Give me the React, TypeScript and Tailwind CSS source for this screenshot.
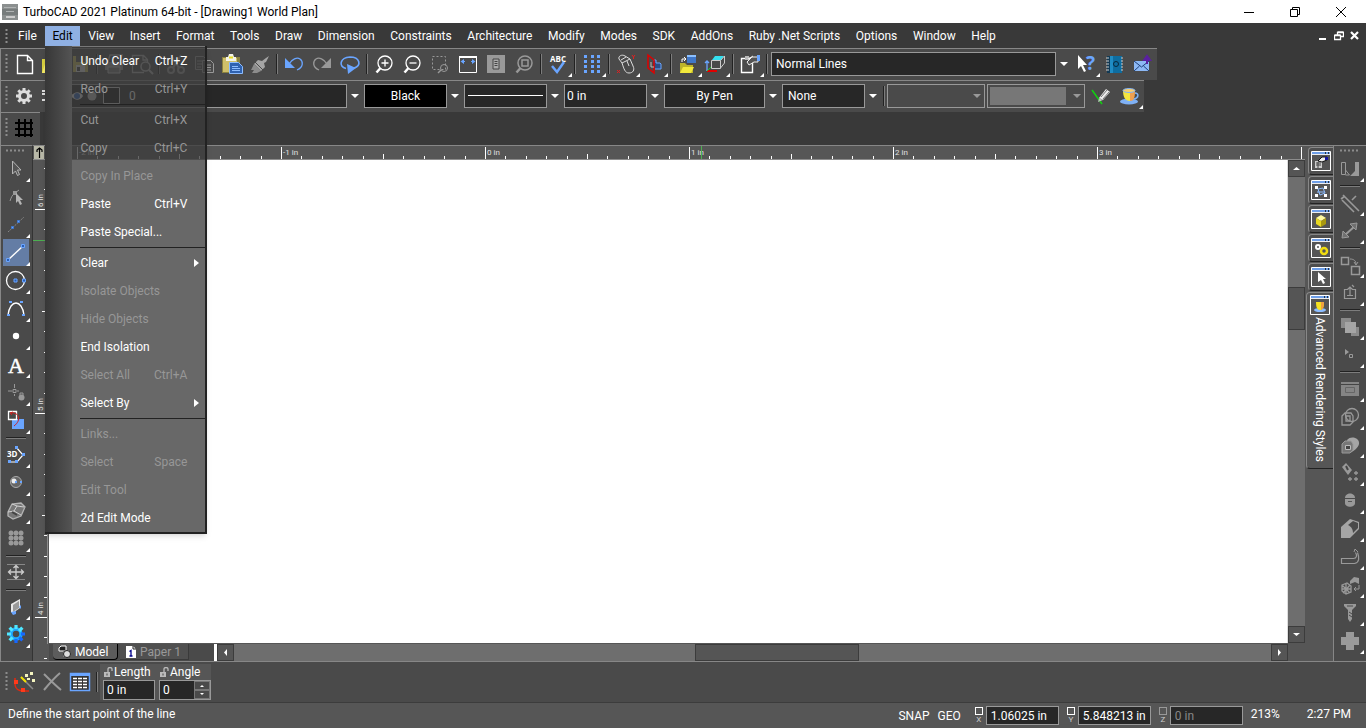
import type { ReactNode } from 'react';
import clsx from 'clsx';

const BLUE = '#6aa5ff';
const GRAY = '#999999';

/* All tool glyphs are drawn on a 28x28 grid, the size of one tool button */
const icons: Record<string, ReactNode> = {
    newFile: <path d="M7.5 5.5h10l5 5v13h-15zM17.5 5.5v5h5" stroke="#fff" strokeWidth="1.4" />,
    open: (
        <>
            <path d="M4 9h7l2 2h9v12H4z" fill="#d8d040" />
            <path d="M7 14h18l-4 9H4z" fill="#f5ec6a" />
        </>
    ),
    save: (
        <>
            <path d="M7 6h15v16H7z" fill="#c9bd5a" />
            <path d="M10 6h9v6h-9z" fill="#555" />
            <path d="M10 15h9v7h-9z" fill="#ddd" />
            <path d="M11 17h3v4h-3z" fill="#444" />
        </>
    ),
    print: (
        <>
            <path d="M8 12l2-7h12l-2 7" stroke="#aaa" strokeWidth="1.5" />
            <path d="M5 12h18v8H5z" fill={GRAY} />
            <path d="M8 17h12v6H8z" fill="#777" stroke="#bbb" />
        </>
    ),
    preview: (
        <>
            <path d="M16 22.5H4.5v-17h11l4 4v3M15 5v5h5" stroke="#aaa" strokeWidth="1.3" />
            <circle cx="17.5" cy="16.5" r="4.5" stroke="#aaa" strokeWidth="1.5" />
            <path d="M21 20l4 4" stroke="#aaa" strokeWidth="2" />
        </>
    ),
    cut: (
        <>
            <path d="M9 5l8 13M19 5l-8 13" stroke={GRAY} strokeWidth="2" />
            <circle cx="9" cy="20" r="3" stroke={GRAY} strokeWidth="2" />
            <circle cx="19" cy="20" r="3" stroke={GRAY} strokeWidth="2" />
        </>
    ),
    copy: (
        <>
            <path d="M5.5 6.5h8l3 3v10h-11zM7 11h6M7 14h6M7 17h4" stroke={GRAY} />
            <path d="M12.5 10.5h8l3 3v9h-11z" fill="#4a4a4a" stroke={GRAY} />
            <path d="M15 15h6M15 17.5h6M15 20h6" stroke={GRAY} />
        </>
    ),
    paste: (
        <>
            <path d="M4 7h18v16H4z" fill="#8b8240" />
            <path d="M5 8h14v14H5z" fill="#cfc06a" />
            <path d="M8 7h2l1-3h4l1 3h2v4H8z" fill="#f4f4e8" />
            <path d="M11 6.5h4v2h-4z" fill="#e4da20" />
            <path d="M11.5 12.5h9l4 4v7h-13z" fill="#2f62b0" stroke="#8cbcff" />
            <path d="M14 16.5h6M14 18.5h8M14 20.5h8" stroke="#8cbcff" />
        </>
    ),
    brush: (
        <>
            <path d="M20 8l3-2-3 6-2 1 1 4-4 4-7-7 4-4 4 1z" fill="#a5a5a5" />
            <path d="M8 14l7 7-4 2-5 0 2-3-3 0z" fill="#8c8c8c" />
            <path d="M9 12l8 8" stroke="#4a4a4a" />
        </>
    ),
    undo: (
        <>
            <path d="M5 8v10h10z" fill={BLUE} />
            <path d="M9 14c3-5 8-7 11-5s4 8-3 11" stroke={BLUE} strokeWidth="1.3" />
        </>
    ),
    redo: (
        <>
            <path d="M23 8v10H13z" fill={GRAY} />
            <path d="M19 14c-3-5-8-7-11-5s-4 8 3 11" stroke={GRAY} strokeWidth="1.3" />
        </>
    ),
    repeat: (
        <>
            <path d="M10 18.5c-8-2-6-11 4-11.5 10 0 12 9 4 11" stroke={BLUE} strokeWidth="1.6" />
            <path d="M11 14l9 4-8 6z" fill={BLUE} />
        </>
    ),
    zoomIn: (
        <>
            <circle cx="15" cy="13" r="7" stroke="#fff" strokeWidth="1.3" />
            <path d="M15 9.5v7M11.5 13h7" stroke="#fff" strokeWidth="1.3" />
            <path d="M10.5 18L6.5 22.5" stroke="#fff" strokeWidth="2.5" />
        </>
    ),
    zoomOut: (
        <>
            <circle cx="15" cy="13" r="7" stroke="#fff" strokeWidth="1.3" />
            <path d="M11.5 13h7" stroke="#fff" strokeWidth="1.3" />
            <path d="M10.5 18L6.5 22.5" stroke="#fff" strokeWidth="2.5" />
        </>
    ),
    zoomWindow: (
        <>
            <path d="M6.5 6.5h13v13h-13z" stroke={GRAY} strokeDasharray="2 2" />
            <circle cx="18" cy="18" r="3.5" stroke={GRAY} />
            <path d="M15 20l-3 3" stroke={GRAY} strokeWidth="1.5" />
        </>
    ),
    zoomExtents: (
        <>
            <path d="M5.5 6.5h17v16h-17z" stroke="#fff" />
            <path d="M5 7h18" stroke="#fff" strokeWidth="2" />
            <path d="M6.5 11.5l3.5-2.5v5zM21.5 11.5l-3.5-2.5v5z" fill={BLUE} />
            <path d="M9 11.5h2M17 11.5h2" stroke={BLUE} />
        </>
    ),
    zoomPage: (
        <>
            <path d="M5 5h18v18H5z" fill={GRAY} />
            <path d="M11 9h6v10h-6z" fill="#aaa" stroke="#444" />
            <path d="M12.5 11.5h3M12.5 13.5h3M12.5 15.5h3" stroke="#444" />
        </>
    ),
    zoomSelection: (
        <>
            <circle cx="15" cy="13" r="7" stroke={GRAY} strokeWidth="1.5" />
            <path d="M12 10h6v6h-6z" stroke={GRAY} strokeWidth="1.5" />
            <path d="M10.5 18L6.5 22.5" stroke={GRAY} strokeWidth="2.5" />
        </>
    ),
    spell: (
        <>
            <text x="6" y="12" fontSize="8" fontWeight="700" fill="#fff" fontFamily="Open Sans, sans-serif">ABC</text>
            <path d="M8 16l5 6 7-10" stroke={BLUE} strokeWidth="2.5" />
        </>
    ),
    snapGrid: (
        <path d="M6 5h3v3H6zM13 5h3v3h-3zM19 5h3v3h-3zM6 10h3v3H6zM13 10h3v3h-3zM19 10h3v3h-3zM6 15h3v3H6zM13 15h3v3h-3zM19 15h3v3h-3zM6 20h3v3H6zM13 20h3v3h-3zM19 20h3v3h-3z" fill={BLUE} />
    ),
    mouse: (
        <>
            <path d="M10 13l8-4 3 7c2 4 0 7-4 7-4 0-5-4-7-10zM15 11l2 5M10 13l-3-4c-1-3 3-5 6-3l5 3M9 10l5-3" stroke="#ddd" />
            <path d="M5 20l3 3M8 20l-3 3M20 5l1.5 2L23 5M21.5 7v2" stroke="#e02020" />
        </>
    ),
    mirrorPlane: (
        <>
            <path d="M13 10h3v3h4l1 1v5h-6" fill="#2b4f85" stroke={BLUE} />
            <path d="M8 5l6 5v13l-6-5z" stroke="#e00000" strokeWidth="1.5" />
            <path d="M11 12v5h3" stroke="#bbb" />
        </>
    ),
    library: (
        <>
            <path d="M13 5h9v8h-9z" fill="#4077c8" />
            <path d="M13 5h9v2h-9z" fill="#8cc0ff" />
            <path d="M8 12V9h4M10 7l2 2-2 2" stroke="#fff" />
            <path d="M6 13h5l2 2h6v8H6z" fill="#bcb32a" />
            <path d="M9 17h11l-3 6H6z" fill="#f2e93c" />
        </>
    ),
    workplane: (
        <>
            <path d="M13 6h9l-3 4h-9z" fill="#35e0f0" />
            <path d="M9.5 10.5h9v8h-9zM18.5 10.5l4-4.5v7l-4 5" stroke="#ccc" />
            <path d="M5 21V11M3 13l2-2 2 2" stroke={BLUE} strokeWidth="1.3" />
            <path d="M5 21h10" stroke="#e00000" strokeWidth="2" />
            <path d="M5 21l4-4" stroke="#20d020" />
        </>
    ),
    properties: (
        <>
            <path d="M5.5 8.5h11v14h-11z" stroke="#fff" strokeWidth="1.4" />
            <path d="M9 6h4v4H9z" fill="#bbb" />
            <path d="M11 12l5-5h6v5h-4l-5 3zM12 9l5-3" fill="#555" stroke="#eee" />
            <path d="M21 5h3v6h-3z" fill={BLUE} />
        </>
    ),
    whatsThis: (
        <>
            <path d="M6 5v14l3-3 3 6 2-1-3-6h4z" fill="#fff" />
            <text x="14" y="20" fontSize="19" fontWeight="700" fill={BLUE} fontFamily="Open Sans, sans-serif">?</text>
        </>
    ),
    book: (
        <>
            <path d="M7 6h15v17H7z" fill="#0e6da0" />
            <path d="M7 6h3v17H7z" fill="#123a55" />
            <path d="M10 6h3v17h-3z" fill="#1f8cc4" />
            <path d="M6 8h3M6 11h3M6 14h3M6 17h3M6 20h3M21 8h2M21 11h2M21 14h2M21 17h2M21 20h2" stroke="#ccc" />
            <circle cx="16" cy="14" r="2.5" stroke="#06283c" />
        </>
    ),
    mail: (
        <>
            <path d="M6 11h15v10H6z" fill="#8db9f5" />
            <path d="M6 11l7.5 6 7.5-6M6 21l5.5-5M21 21l-5.5-5" stroke="#1d3f78" />
            <path d="M19 14V8M16 10l3-4 3 4z" stroke="#5a20a0" strokeWidth="2" fill="#5a20a0" />
        </>
    ),
    gear: (
        <>
            <circle cx="14" cy="14" r="4.5" stroke="#ddd" strokeWidth="3" />
            <path d="M14 6v3M14 19v3M6 14h3M19 14h3M8.3 8.3l2.2 2.2M17.5 17.5l2.2 2.2M8.3 19.7l2.2-2.2M17.5 10.5l2.2-2.2" stroke="#ddd" strokeWidth="3" />
        </>
    ),
    layers: <path d="M4 9h12M4 12h12M4 18h12" stroke="#ddd" strokeWidth="2" />,
    pencil: (
        <>
            <path d="M5 8l10 14" stroke="#10d010" strokeWidth="1.5" />
            <path d="M12 16l7-9 4 3-7 8z" fill="#eee" />
            <path d="M14 15l6-7M16 17l6-7" stroke="#777" />
            <path d="M12 16l-1 4 5-2z" fill="#bbb" />
        </>
    ),
    cup: (
        <>
            <ellipse cx="14" cy="19.5" rx="9" ry="3" fill="#7fb1f5" />
            <path d="M8 8h7v11c-5 0-7-4-7-11z" fill="#f5e640" />
            <path d="M15 8h5c0 8-1 11-5 11z" fill="#f0a050" />
            <ellipse cx="14" cy="8.5" rx="6" ry="2" fill="#f8d070" stroke="#7fb1f5" />
            <path d="M20 11c4 0 4 5-1 6" stroke="#7fb1f5" strokeWidth="1.5" />
        </>
    ),
    hash: <path d="M9 5v18M15 5v18M21 5v18M5 9h18M5 15h18M5 21h18" stroke="#000" strokeWidth="2" />,

    /* drawing tools, left bar */
    select: <path d="M10.5 6v13l3-3 2 4.5 2-1-2-4.5h3.5z" fill="#555" stroke="#b5b5b5" />,
    editNode: (
        <>
            <path d="M13 10c-3 2-4 5-5 8M13 10l4-3" stroke={GRAY} />
            <path d="M11 8h4v4h-4z" fill={GRAY} />
            <path d="M14 10v10l2-2 2 4 2-1-2-4h3z" fill="#b5b5b5" />
        </>
    ),
    construction: (
        <>
            <path d="M6 21L22 6" stroke="#888" strokeDasharray="2 1" />
            <path d="M9.5 15.5h2v2h-2zM15.5 9.5h2v2h-2z" fill={BLUE} stroke="#3f78d0" />
        </>
    ),
    line: (
        <>
            <path d="M6 21L21 7" stroke="#fff" strokeWidth="1.4" />
            <path d="M4.5 19.5h3v3h-3zM19.5 5.5h3v3h-3z" fill="#2b5fb5" stroke={BLUE} />
        </>
    ),
    circle: (
        <>
            <circle cx="13.5" cy="13.5" r="9" stroke="#fff" strokeWidth="1.3" />
            <path d="M12 12h3v3h-3zM20.5 12h3v3h-3z" fill="#2b5fb5" stroke={BLUE} />
        </>
    ),
    spline: (
        <>
            <path d="M6 20C8 4 20 4 22 20" stroke="#fff" strokeWidth="1.3" />
            <path d="M7 6h3v2H7zM18 6h3v2h-3zM5 19h3v2H5zM20 19h3v2h-3z" fill={BLUE} />
        </>
    ),
    point: <circle cx="14" cy="13" r="3.2" fill="#fff" />,
    text: <text x="6" y="22" fontSize="22" fill="#fff" stroke="#fff" strokeWidth=".5" fontFamily="Liberation Serif, serif">A</text>,
    constraint: (
        <>
            <path d="M6 12h4M12.5 5v4M15 12h2M12.5 15v2M11 10.5h3v3h-3z" stroke={GRAY} />
            <circle cx="19.5" cy="18.5" r="3" fill={GRAY} />
            <path d="M18 16v-2h3v2" stroke={GRAY} />
        </>
    ),
    rotateCopy: (
        <>
            <path d="M10 12h12v10H10z" fill={BLUE} />
            <path d="M6.5 4.5h8v8h-8z" stroke="#fff" strokeWidth="1.3" />
            <path d="M9 6c8-1 11 7 3 13M11 5L8 6l2 2" stroke="#d02020" />
        </>
    ),
    poly3d: (
        <>
            <path d="M14 6l7 8-6 7H7" stroke="#fff" strokeWidth="1.2" />
            <path d="M13 5h3v3h-3zM20 12h3v3h-3zM13 19h3v3h-3zM6 19h3v3H6z" fill={BLUE} />
            <text x="5" y="16" fontSize="8" fontWeight="700" fill="#fff" fontFamily="Open Sans, sans-serif">3D</text>
        </>
    ),
    sphere: (
        <>
            <circle cx="14" cy="13" r="5.5" fill="#666" stroke="#aaa" />
            <circle cx="12" cy="12" r="2.5" fill="#eee" />
            <path d="M13 12h2v2h-2zM18 12h2v2h-2z" fill={BLUE} />
        </>
    ),
    cylinder: (
        <>
            <path d="M6 15l4-8 9-1 4 4-4 9-8 3-5-3z" fill="#777" stroke="#b5b5b5" strokeWidth="1.3" />
            <path d="M6 15l6-1 7 4M10 7l5 2-3 5M15 9l7 1" stroke="#d0d0d0" />
            <path d="M10 15l5 3" stroke="#444" strokeWidth="2" />
        </>
    ),
    patternCopy: (
        <g fill={GRAY}>
            <circle cx="9" cy="8" r="2.5" /><circle cx="14" cy="8" r="2.5" /><circle cx="19" cy="8" r="2.5" />
            <circle cx="9" cy="13" r="2.5" /><circle cx="14" cy="13" r="2.5" /><circle cx="19" cy="13" r="2.5" />
            <circle cx="9" cy="18" r="2.5" /><circle cx="14" cy="18" r="2.5" /><circle cx="19" cy="18" r="2.5" />
        </g>
    ),
    move: (
        <>
            <path d="M5 5.5h18M5 20.5h18" stroke="#888" />
            <path d="M14 7v12M7 13h14M11.5 9L14 6.5 16.5 9M11.5 17l2.5 2.5 2.5-2.5M9 10.5L6.5 13 9 15.5M19 10.5l2.5 2.5-2.5 2.5" stroke="#ccc" strokeWidth="1.3" />
        </>
    ),
    slab: (
        <>
            <path d="M9 11l9-5v9l-7 5-2-1z" fill="#e8e8e8" />
            <path d="M11 12l6-4v7l-6 4z" fill="#999" />
            <path d="M9 19l5-1v3l-3 1zM17 14l2-2v4z" fill={BLUE} />
        </>
    ),
    gearBlue: (
        <>
            <circle cx="14" cy="13" r="5" stroke="#1fa8ff" strokeWidth="3.5" />
            <path d="M14 4v4M5 13h4M7.6 6.6l3 3M17 10l3.4-3.4M7.6 19.4l3-3" stroke="#4fe6ff" strokeWidth="3.2" />
            <path d="M14 18v4M19 13h4M17.4 16.4l3 3" stroke="#1668ff" strokeWidth="3.2" />
        </>
    ),

    /* modify tools, right bar */
    join: (
        <>
            <path d="M5.5 7.5h4v12h-4zM9.5 15l4 5h-4" stroke={GRAY} />
            <path d="M19 7h4v14h-9l5-5z" fill={GRAY} />
        </>
    ),
    offset: <path d="M7 6l16 16M6 11l12 12M5 10l4-3M16 11l4-4" stroke={GRAY} strokeWidth="1.6" />,
    stretch: (
        <>
            <path d="M9 18L19 9" stroke={GRAY} strokeWidth="2" />
            <path d="M6 21l1-7 6 6zM21 6l-7 1 6 6z" fill="#707070" stroke={GRAY} />
        </>
    ),
    transform: (
        <>
            <path d="M5.5 6.5h7v7h-7zM15.5 15.5h8v8h-8z" stroke={GRAY} strokeWidth="1.5" />
            <path d="M14 8c4 0 6 2 6 5M18 11l2 3 2-3" stroke={GRAY} />
        </>
    ),
    extrude: (
        <>
            <path d="M12 10.5H8.5v9h11v-9H16M11 16.5h6" stroke={GRAY} strokeWidth="1.2" />
            <path d="M14 16V8M11.5 10.5L14 8l2.5 2.5M18 8l-2-2" stroke={GRAY} strokeWidth="1.2" />
        </>
    ),
    group: (
        <>
            <path d="M5 5h10v10H5z" fill="#8a8a8a" />
            <path d="M15 14h8v9h-8z" fill="#8a8a8a" />
            <path d="M9 9h11v11H9z" fill="#a5a5a5" />
        </>
    ),
    copyEntity: (
        <>
            <path d="M9 8l4 3-4 3z" fill={GRAY} />
            <path d="M13.5 13.5h3v3h-3z" stroke={GRAY} />
        </>
    ),
    wall: (
        <>
            <path d="M5 7h18v14H5z" fill="#858585" />
            <path d="M5 9.5h18" stroke="#444" />
            <path d="M9.5 12.5h9v5h-9z" stroke="#666" />
        </>
    ),
    union: (
        <>
            <circle cx="16" cy="12" r="6.5" stroke={GRAY} strokeWidth="1.3" />
            <path d="M6 13l3-3h6l2 3v6l-3 3H6zM10 13h4v5h-4z" stroke={GRAY} strokeWidth="1.3" />
        </>
    ),
    subtract: (
        <>
            <path d="M11 9c4-5 13-2 12 4-1 4-5 7-9 9z" fill="#a5a5a5" />
            <path d="M6 13l3-3h6l2 3v6l-3 3H6z" fill="#777" stroke={GRAY} />
            <path d="M9.5 14.5h5v4h-5z" stroke="#bbb" fill="#444" />
        </>
    ),
    spray: (
        <>
            <path d="M6 8l4-4 6 7-4 5z" fill={GRAY} />
            <path d="M10 7l2 4" stroke="#444" strokeWidth="2" />
            <path d="M20 12v4M18 14h4M20 18v4M18 20h4M14 18v4M12 20h4" stroke={GRAY} strokeWidth="1.3" />
        </>
    ),
    fixture: (
        <>
            <path d="M9 11c0-6 10-6 10 0v5c0 5-10 5-10 0z" fill={GRAY} />
            <path d="M8 11.5h12" stroke="#4a4a4a" />
            <path d="M12 14.5h4" stroke="#555" />
        </>
    ),
    roof: (
        <>
            <path d="M5 12l9-8 9 3v7l-9 9H5z" fill="#a5a5a5" />
            <path d="M12 10l5-4 5 2v5l-5 5c0-3-1-6-5-8z" fill="#4a4a4a" />
        </>
    ),
    sweep: (
        <>
            <path d="M5.5 15.5h12c3 0 4-3 2-6M5.5 20.5h13c5-1 5-6 3-11M5.5 15v6" stroke={GRAY} strokeWidth="1.2" />
            <path d="M18 9l1-3 3 3" stroke={GRAY} />
        </>
    ),
    assemble: (
        <>
            <path d="M14 10l4-4 5 1v6l-4-2-5 2z" fill={GRAY} />
            <path d="M6 14l5-2 4 3v6l-5 2-4-3zM6 14l8 8M14 14l-7 8M10 12v11M6 18h9" stroke={GRAY} strokeWidth="1.3" />
            <path d="M23 14v4h-5M20 16l-2 2 2 2" stroke={GRAY} />
        </>
    ),
    screw: (
        <>
            <path d="M8 5h12v2l-4 4v9l-2 3-2-3v-9L8 7z" fill={GRAY} />
            <path d="M11 7h6M13 13l3 2M13 16l3 2" stroke="#4a4a4a" />
        </>
    ),
    plus: <path d="M10 5h8v5h5v8h-5v5h-8v-5H5v-8h5z" fill="#9a9a9a" />,

    /* line tool inspector */
    wizard: (
        <>
            <path d="M5 10v6c0 5 4 7 8 7h6" stroke="#e02810" strokeWidth="1.6" />
            <path d="M4 12h4v4H4zM11 20h4v4h-4z" fill="#ff3a1a" />
            <path d="M11 9l12 12" stroke="#888" strokeWidth="1.5" />
            <path d="M11 9l5 5" stroke="#f0e000" strokeWidth="2" />
            <path d="M15 6h3v3h-3zM20 4h3v3h-3zM17 10h3v2h-3zM22 11h3v3h-3z" fill="#f4f4c0" />
        </>
    ),
    cancel: <path d="M6 6c5 5 11 11 17 16M22 5C16 10 11 16 6 22" stroke={GRAY} strokeWidth="2" />,
    table: (
        <>
            <path d="M4.5 5.5h19v17h-19z" fill="#333" stroke={BLUE} strokeWidth="1.5" />
            <path d="M4 5h20v3H4z" fill={BLUE} />
            <path d="M7 10.5h14M7 13.5h14M7 16.5h14M7 19.5h14" stroke="#fff" strokeWidth="1.6" strokeDasharray="4 1" />
        </>
    ),
};

interface Tool {
    icon: string;
    label: string;
    more?: boolean;
    active?: boolean;
}

const t = (icon: string, label: string, more = false, active = false): Tool => ({ icon, label, more, active });

const mainTools: Tool[][] = [
    [t('newFile', 'New'), t('open', 'Open'), t('save', 'Save')],
    [t('print', 'Print'), t('preview', 'Print Preview')],
    [t('cut', 'Cut'), t('copy', 'Copy'), t('paste', 'Paste'), t('brush', 'Format Painter')],
    [t('undo', 'Undo'), t('redo', 'Redo'), t('repeat', 'Repeat')],
    [
        t('zoomIn', 'Zoom In'),
        t('zoomOut', 'Zoom Out'),
        t('zoomWindow', 'Zoom Window'),
        t('zoomExtents', 'Zoom Extents'),
        t('zoomPage', 'Zoom Page'),
        t('zoomSelection', 'Zoom Selection'),
    ],
    [t('spell', 'Spelling', true)],
    [t('snapGrid', 'Snap Grid', true)],
    [t('mouse', 'Input Device', true), t('mirrorPlane', 'Section Plane', true)],
    [t('library', 'Library', true), t('workplane', 'Workplane', true)],
    [t('properties', 'Properties', true)],
];

const drawTools: Tool[][] = [
    [
        t('select', 'Select', true),
        t('editNode', 'Node Edit'),
        t('construction', 'Construction Line', true),
        t('line', 'Line', true, true),
        t('circle', 'Circle', true),
        t('spline', 'Curve', true),
        t('point', 'Point', true),
        t('text', 'Text', true),
        t('constraint', 'Constraint', true),
        t('rotateCopy', 'Transform', true),
    ],
    [t('poly3d', '3D Polyline', true), t('sphere', 'Sphere', true), t('cylinder', 'Cylinder', true), t('patternCopy', 'Pattern', true)],
    [t('move', 'Move', true)],
    [t('slab', 'Slab', true), t('gearBlue', 'Settings', true)],
];

const modifyTools: Tool[][] = [
    [t('join', 'Join', true)],
    [t('offset', 'Offset', true), t('stretch', 'Stretch', true)],
    [t('transform', 'Transform', true), t('extrude', 'Extrude', true)],
    [t('group', 'Group', true), t('copyEntity', 'Copy Entity', true)],
    [
        t('wall', 'Wall', true),
        t('union', 'Union', true),
        t('subtract', 'Subtract', true),
        t('spray', 'Scatter', true),
        t('fixture', 'Fixture', true),
        t('roof', 'Roof', true),
        t('sweep', 'Sweep', true),
        t('assemble', 'Assemble', true),
        t('screw', 'Fastener', true),
        t('plus', 'Add', true),
    ],
];

const menus = [
    'File', 'Edit', 'View', 'Insert', 'Format', 'Tools', 'Draw', 'Dimension', 'Constraints', 'Architecture',
    'Modify', 'Modes', 'SDK', 'AddOns', 'Ruby .Net Scripts', 'Options', 'Window', 'Help',
];

interface MenuEntry {
    text: string;
    keys?: string;
    off?: boolean;
    sub?: boolean;
}

const editMenu: MenuEntry[][] = [
    [{ text: 'Undo Clear', keys: 'Ctrl+Z' }, { text: 'Redo', keys: 'Ctrl+Y', off: true }],
    [
        { text: 'Cut', keys: 'Ctrl+X', off: true },
        { text: 'Copy', keys: 'Ctrl+C', off: true },
        { text: 'Copy In Place', off: true },
        { text: 'Paste', keys: 'Ctrl+V' },
        { text: 'Paste Special...' },
    ],
    [
        { text: 'Clear', sub: true },
        { text: 'Isolate Objects', off: true },
        { text: 'Hide Objects', off: true },
        { text: 'End Isolation' },
        { text: 'Select All', keys: 'Ctrl+A', off: true },
        { text: 'Select By', sub: true },
    ],
    [
        { text: 'Links...', off: true },
        { text: 'Select', keys: 'Space', off: true },
        { text: 'Edit Tool', off: true },
        { text: '2d Edit Mode' },
    ],
];

function ToolButton({ icon, label, more, active }: Tool) {
    return (
        <button type="button" aria-label={label} className="block h-7 w-7 shrink-0">
            <svg viewBox="0 0 28 28" className="h-7 w-7" fill="none">
                {active && <path d="M1 0h26v27H1z" fill="#647da5" />}
                {icons[icon]}
                {more && <path d="M28 23v4h-4z" fill="#fff" />}
            </svg>
        </button>
    );
}

function Grip({ vertical = false }: { vertical?: boolean }) {
    return vertical ? (
        <svg viewBox="0 0 20 3" className="mx-auto h-[3px] w-5 shrink-0">
            <path d="M0 1.5h20" stroke="#8c8c8c" strokeWidth="2" strokeDasharray="2 2" />
        </svg>
    ) : (
        <svg viewBox="0 0 3 20" className="ml-1 h-5 w-[3px] shrink-0">
            <path d="M1.5 0v20" stroke="#8c8c8c" strokeWidth="2" strokeDasharray="2 2" />
        </svg>
    );
}

function Divider() {
    return <div className="mx-[2px] h-5 w-[2px] shrink-0 border-r border-[#7d7d7d] bg-[#222]" />;
}

function ToolRow({ groups }: { groups: Tool[][] }) {
    return (
        <>
            {groups.map((group, i) => (
                <div key={i} className="flex items-center">
                    {i > 0 && <Divider />}
                    {group.map((tool) => <ToolButton key={tool.label} {...tool} />)}
                </div>
            ))}
        </>
    );
}

function ToolColumn({ groups }: { groups: Tool[][] }) {
    return (
        <div className="flex flex-col items-center">
            {groups.map((group, i) => (
                <div key={i}>
                    {i > 0 && <div className="mx-1 my-[2px] h-[2px] border-b border-[#7d7d7d] bg-[#222]" />}
                    {group.map((tool) => <ToolButton key={tool.label} {...tool} />)}
                </div>
            ))}
        </div>
    );
}

function Caret({ dim }: { dim?: boolean }) {
    return (
        <svg viewBox="0 0 16 8" className={clsx('h-2 w-4 shrink-0', dim ? 'text-[#999]' : 'text-white')}>
            <path d="M4 2h8l-4 4z" fill="currentColor" />
        </svg>
    );
}

interface ComboProps {
    label: string;
    value: string;
    box: string;
    children?: ReactNode;
}

function Combo({ label, value, box, children }: ComboProps) {
    return (
        <div className="flex items-center">
            <div className="relative">
                <select aria-label={label} className={clsx('block h-6 appearance-none border border-[#999] text-white outline-none', box)}>
                    <option>{value}</option>
                </select>
                {children}
            </div>
            <Caret />
        </div>
    );
}

function DisabledCombo({ label, filled }: { label: string; filled?: boolean }) {
    return (
        <div className="relative mr-[2px]">
            <select
                aria-label={label}
                disabled
                className={clsx('block h-6 w-[98px] appearance-none border border-[#999] bg-[#4a4a4a] opacity-100', filled && 'bg-[linear-gradient(#777,#777)] bg-[length:76px_18px] bg-[position:2px_2px] bg-no-repeat')}
            />
            <div className="pointer-events-none absolute top-2 right-0"><Caret dim /></div>
        </div>
    );
}

function EditMenu() {
    return (
        <div role="menu" className="absolute top-5 left-0 z-20 flex w-[162px] border-r-2 border-b-2 border-[#222] bg-[#3b3b3b]/77 text-white shadow-md">
            <div className="w-[27px] shrink-0 bg-linear-to-r from-[#373737] to-[#545454]" />
            <div className="min-w-0 flex-1 border-t border-[#777]">
                {editMenu.map((group, i) => (
                    <div key={i}>
                        {i > 0 && <div className="my-px ml-2 h-px bg-[#222]" />}
                        {group.map((entry) => (
                            <button
                                key={entry.text}
                                type="button"
                                role="menuitem"
                                disabled={entry.off}
                                className={clsx('flex h-7 w-full items-center justify-between pr-[18px] pl-2', entry.off && 'text-[#979797]')}
                            >
                                <span>{entry.text}</span>
                                {entry.keys && <span>{entry.keys}</span>}
                                {entry.sub && (
                                    <svg viewBox="0 0 5 8" className="-mr-3 h-2 w-[5px]"><path d="M0 0l5 4-5 4z" fill="#fff" /></svg>
                                )}
                            </button>
                        ))}
                    </div>
                ))}
            </div>
        </div>
    );
}

function TitleBar() {
    return (
        <header className="flex h-[23px] shrink-0 items-center bg-white pr-[2px] pl-[2px] text-black">
            <svg viewBox="0 0 16 16" className="h-4 w-4">
                <path d="M0 0h16v16H0z" fill="#8b8f8f" />
                <path d="M0 5h16v6H0z" fill="#777c7c" />
                <path d="M2 3.5h12M4 7.5h8" stroke="#b0b3b3" />
                <path d="M4 13h9" stroke="#ccc" strokeWidth="2" />
            </svg>
            <h1 className="ml-[5px] flex-1">TurboCAD 2021 Platinum 64-bit - [Drawing1 World Plan]</h1>
            <button type="button" aria-label="Minimize" className="flex w-[46px] justify-center">
                <svg viewBox="0 0 10 10" className="h-[10px] w-[10px]"><path d="M0 5.5h10" stroke="#000" /></svg>
            </button>
            <button type="button" aria-label="Restore" className="flex w-[46px] justify-center">
                <svg viewBox="0 0 10 10" className="h-[10px] w-[10px]" fill="none"><path d="M.5 2.5h7v7h-7zM2.5 2.5v-2h7v7h-2" stroke="#000" /></svg>
            </button>
            <button type="button" aria-label="Close" className="flex w-[46px] justify-center">
                <svg viewBox="0 0 10 10" className="h-[10px] w-[10px]"><path d="M0 0l10 10M10 0L0 10" stroke="#000" /></svg>
            </button>
        </header>
    );
}

function MenuBar() {
    return (
        <nav className="flex h-[25px] shrink-0 items-center justify-between bg-[#393939] pr-[6px]">
            <div className="flex items-center">
                <svg viewBox="0 0 3 14" className="ml-[5px] h-[14px] w-[3px] shrink-0">
                    <path d="M1.5 0v14" stroke="#8c8c8c" strokeWidth="2" strokeDasharray="2 2" />
                </svg>
                <ul className="ml-[3px] flex w-[992px] justify-between">
                    {menus.map((name) => (
                        <li key={name} className="relative">
                            <button type="button" className={clsx('block h-5 px-[7px]', name === 'Edit' && 'bg-[#8fb0e3] text-black')}>{name}</button>
                            {name === 'Edit' && <EditMenu />}
                        </li>
                    ))}
                </ul>
            </div>
            <div className="flex gap-[6px]">
                <button type="button" aria-label="Minimize drawing">
                    <svg viewBox="0 0 10 10" className="h-[10px] w-[10px]"><path d="M1 8h7" stroke="#fff" strokeWidth="2" /></svg>
                </button>
                <button type="button" aria-label="Restore drawing">
                    <svg viewBox="0 0 10 10" className="h-[10px] w-[10px]" fill="none">
                        <path d="M.5 4.5h6v4h-6zM3.5 4V1.5h6v4H7M.5 4h6M3.5 1h6" stroke="#fff" strokeWidth="1.3" />
                    </svg>
                </button>
                <button type="button" aria-label="Close drawing">
                    <svg viewBox="0 0 10 10" className="h-[10px] w-[10px]"><path d="M1 1l7 7M8 1L1 8" stroke="#fff" strokeWidth="2.2" /></svg>
                </button>
            </div>
        </nav>
    );
}

const bar = 'flex h-8 w-fit shrink-0 items-center border-t border-l border-[#878787] bg-[#4a4a4a] pr-px pb-px';

function Toolbars() {
    return (
        <div className="shrink-0 bg-[#393939]">
            <div className={bar}>
                <Grip />
                <div className="ml-[2px] flex items-center">
                    <ToolRow groups={mainTools} />
                    <Divider />
                    <div className="ml-px"><Combo label="Style" value="Normal Lines" box="w-[285px] bg-[#272727] px-1" /></div>
                    <ToolButton icon="whatsThis" label="What's This" more />
                    <ToolButton icon="book" label="Help Book" />
                    <ToolButton icon="mail" label="Feedback" />
                </div>
            </div>
            <div className={bar}>
                <Grip />
                <div className="ml-[2px] flex items-center">
                    <ToolButton icon="gear" label="Options" />
                    <ToolButton icon="layers" label="Layers" />
                    <div className="mr-px flex items-center">
                        <div className="flex h-6 w-[281px] items-center border border-[#999] bg-[#272727] pl-1 text-white">
                            <svg viewBox="0 0 50 18" className="h-[18px] w-[50px]" fill="none">
                                <path d="M0 9c4-5 9-5 12 0-3 5-8 5-12 0z" fill="#ddd" />
                                <circle cx="6" cy="9" r="3" fill="#2b5fb5" />
                                <circle cx="21" cy="9" r="4.5" fill="#bbb" />
                                <path d="M32.5.5h16v16h-16z" fill="#111" stroke="#ccc" />
                            </svg>
                            <span className="ml-2">0</span>
                        </div>
                        <Caret />
                    </div>
                    <div className="flex gap-px">
                        <Combo label="Pen color" value="Black" box="w-[83px] bg-black text-center" />
                        <Combo label="Pen style" value="" box="w-[83px] bg-[#272727]">
                            <div className="pointer-events-none absolute inset-x-1 top-[11px] h-px bg-white" />
                        </Combo>
                        <Combo label="Pen width" value="0 in" box="w-[83px] bg-[#272727] px-[2px]" />
                        <Combo label="Brush color" value="By Pen" box="w-[101px] bg-[#272727] text-center" />
                        <Combo label="Brush style" value="None" box="w-[83px] bg-[#272727] px-[5px]" />
                    </div>
                    <Divider />
                    <DisabledCombo label="Material" />
                    <DisabledCombo label="Environment" filled />
                    <ToolButton icon="pencil" label="Pick Style" />
                    <ToolButton icon="cup" label="Render" more />
                </div>
            </div>
            <div className="flex h-[33px] w-[40px] items-center border-t border-l border-[#878787] bg-[#4a4a4a] pb-[2px]">
                <Grip />
                <div className="ml-[2px]"><ToolButton icon="hash" label="Grid" /></div>
            </div>
        </div>
    );
}

/* One inch is 204px on screen at the current zoom */
const INCH = 204;

function TopRuler() {
    const zero = 440;
    const ticks = Array.from({ length: 120 }, (_, i) => i - 20);
    return (
        <svg className="h-[13px] min-w-0 flex-1" shapeRendering="crispEdges">
            {ticks.map((n) => {
                const x = Math.round(zero + (n * INCH) / 10);
                const len = n % 10 === 0 ? 12 : n % 5 === 0 ? 5 : 3;
                return <path key={n} d={`M${x + 0.5} ${13 - len}V13`} stroke="#fff" />;
            })}
            {[-2, -1, 0, 1, 2, 3].map((n) => (
                <text key={n} x={zero + n * INCH + 2} y="9" fontSize="8" fill="#e0e0e0">{n} in</text>
            ))}
            <path d="M656.5 0v13" stroke="#4caf50" />
        </svg>
    );
}

function SideRuler() {
    const six = 49;
    const ticks = Array.from({ length: 50 }, (_, i) => i - 2);
    return (
        <svg className="h-full w-4 shrink-0 bg-[#565656]" shapeRendering="crispEdges">
            {ticks.map((n) => {
                const y = Math.round(six + (n * INCH) / 10);
                const len = n % 10 === 0 ? 12 : n % 5 === 0 ? 5 : 3;
                return <path key={n} d={`M${14 - len} ${y + 0.5}H14`} stroke="#fff" />;
            })}
            {[6, 5, 4].map((n, i) => (
                <text key={n} transform={`translate(10 ${six + i * INCH - 2}) rotate(-90)`} fontSize="8" fill="#e0e0e0">{n} in</text>
            ))}
            <path d="M0 80.5h14" stroke="#4caf50" />
            <path d="M14.5 0v484" stroke="#8c8c8c" />
        </svg>
    );
}

function ScrollArrow({ label, d }: { label: string; d: string }) {
    return (
        <button type="button" aria-label={label} className="h-[17px] w-[17px] shrink-0 border border-[#3c3c3c] bg-[#555]">
            <svg viewBox="0 0 15 15" className="h-[15px] w-[15px]"><path d={d} fill="#fff" /></svg>
        </button>
    );
}

function Drawing() {
    return (
        <main className="flex min-w-0 flex-1 flex-col border-t border-[#878787] bg-[#565656]">
            <div className="flex h-[14px] shrink-0 border-b border-[#8c8c8c]">
                <svg viewBox="0 0 12 13" className="h-[13px] w-3 shrink-0">
                    <path d="M1 0h10v13H1z" fill="#b9b9a8" />
                    <path d="M6.5 12V2M4 6V4l2.5-2L9 4v2" stroke="#000" strokeWidth="1.2" fill="none" />
                </svg>
                <TopRuler />
            </div>
            <div className="flex min-h-0 flex-1">
                <SideRuler />
                <div className="flex min-w-0 flex-1 flex-col">
                    <div className="flex min-h-0 flex-1">
                        <div className="flex-1 border-r border-[#ddd] bg-white" />
                        <div className="flex w-[17px] flex-col bg-[#6e6e6e]">
                            <ScrollArrow label="Scroll up" d="M4 9h7L7.5 6z" />
                            <div className="flex-[110]" />
                            <div className="flex-[42] border border-[#3c3c3c] bg-[#555]" />
                            <div className="flex-[297]" />
                            <ScrollArrow label="Scroll down" d="M4 6h7L7.5 9z" />
                        </div>
                    </div>
                    <div className="flex h-[18px] shrink-0 bg-[#565656] pt-px">
                        <div className="flex w-[168px] border-r-[3px] border-white bg-[#4a4a4a] pl-1">
                            <button type="button" className="flex h-4 w-[65px] items-center gap-1 rounded-b border-r border-b border-black bg-[#5c5c5c] pl-[5px] text-white">
                                <svg viewBox="0 0 13 13" className="h-[13px] w-[13px]">
                                    <path d="M1 3l2-2h5v5H1z" fill="#222" stroke="#fff" />
                                    <path d="M5 5h6v4L8 12H5z" fill="#888" />
                                    <circle cx="9" cy="9" r="3.5" fill="#ddd" stroke="#222" />
                                </svg>
                                Model
                            </button>
                            <button type="button" className="ml-[2px] flex h-4 w-[69px] items-center gap-1 border-r border-b border-[#3a3a3a] bg-[#505050] pl-[6px] text-[#999]">
                                <svg viewBox="0 0 10 12" className="h-3 w-[10px]">
                                    <path d="M0 0h7l3 3v9H0z" fill="#fff" />
                                    <path d="M7 0v3h3" stroke="#222" fill="none" />
                                    <path d="M3.5 5.5L5 4.5V10M3.5 10h3" stroke="#00008a" strokeWidth="1.3" fill="none" />
                                </svg>
                                Paper 1
                            </button>
                        </div>
                        <div className="flex flex-1 bg-[#6e6e6e]">
                            <ScrollArrow label="Scroll left" d="M9 4v7L6 7.5z" />
                            <div className="flex-[461]" />
                            <div className="flex-[163] border border-[#3c3c3c] bg-[#555]" />
                            <div className="flex-[412]" />
                            <ScrollArrow label="Scroll right" d="M6 4v7l3-3.5z" />
                        </div>
                        <div className="w-[17px] bg-[#565656]" />
                    </div>
                </div>
            </div>
        </main>
    );
}

function PanelIcon({ children }: { children?: ReactNode }) {
    return (
        <svg viewBox="0 0 20 20" className="h-5 w-5 shrink-0" fill="none">
            <path d="M.5.5h19v19H.5z" fill="#555" stroke="#fff" />
            <path d="M1 1h18v2H1z" fill="#6f9fe8" />
            <path d="M14 1h1v2h-1zM17 1h1v2h-1z" fill="#234" />
            <path d="M1 3.5h18" stroke="#eee" />
            {children}
        </svg>
    );
}

const panels = [
    {
        label: 'Selection Info',
        art: (
            <>
                <path d="M4 10h7v7H4z" fill="#ccc" />
                <path d="M5 12h5M5 14h5M7 11v6" stroke="#444" />
                <path d="M7 10l4-4h5v3l-5 2z" fill="#eee" stroke="#111" />
                <path d="M14 6h3v3h-3z" fill="#1414a0" />
            </>
        ),
    },
    {
        label: 'Blocks',
        art: (
            <>
                <path d="M4 6h3v3H4zM13 6h3v3h-3zM4 14h3v3H4zM13 14h3v3h-3z" fill="#fff" />
                <path d="M7 9l5-1 2 5-5 2zM6 12h7" stroke="#8cbcff" />
            </>
        ),
    },
    {
        label: 'Library',
        art: (
            <>
                <path d="M5 9l5-3 5 3-5 3z" fill="#fff9a0" />
                <path d="M5 9l5 3v6l-5-3z" fill="#e8d820" />
                <path d="M15 9l-5 3v6l5-3z" fill="#a89810" />
            </>
        ),
    },
    {
        label: 'Tool Settings',
        art: (
            <>
                <circle cx="7" cy="9" r="2" stroke="#fff" strokeWidth="2" />
                <circle cx="13" cy="13" r="3" stroke="#f0dc10" strokeWidth="2.5" />
            </>
        ),
    },
    { label: 'Selector', art: <path d="M7 5v10l3-2 2 4 2-1-2-4h3z" fill="#fff" /> },
];

function PanelDock() {
    return (
        <aside className="flex w-[29px] shrink-0 flex-col items-end border-t border-r border-[#878787] bg-[#565656] pt-px">
            {panels.map((panel) => (
                <button
                    key={panel.label}
                    type="button"
                    aria-label={panel.label}
                    className="mb-px flex h-7 w-[25px] items-center justify-center rounded-l border-t border-b border-l border-t-[#888] border-b-[#222] border-l-[#888] bg-[#4e4e4e]"
                >
                    <PanelIcon>{panel.art}</PanelIcon>
                </button>
            ))}
            <button
                type="button"
                className="flex w-[27px] flex-col items-center gap-[2px] rounded-l border-t border-b border-l border-t-[#888] border-b-[#222] border-l-[#888] bg-[#565656] pt-[2px] pb-[6px] text-white"
            >
                <PanelIcon>
                    <ellipse cx="10" cy="15" rx="6" ry="2" fill="#8cbcff" />
                    <path d="M6 7h8c0 5-1 8-4 8s-4-3-4-8z" fill="#f5e020" />
                    <path d="M11 7h3c0 5-1 7-3 8z" fill="#f0a040" />
                </PanelIcon>
                <span className="leading-4 [writing-mode:vertical-rl]">Advanced Rendering Styles</span>
            </button>
        </aside>
    );
}

function Unlocked() {
    return (
        <svg viewBox="0 0 9 10" className="h-[10px] w-[9px]" fill="none">
            <path d="M0 5h6v5H0z" fill="#bbb" />
            <path d="M4 5V2c0-2 4-2 4 0v2" stroke="#bbb" strokeWidth="1.3" />
            <path d="M3 6.5v2" stroke="#444" />
        </svg>
    );
}

function Inspector() {
    return (
        <section className="flex h-[41px] shrink-0 items-center border-t border-[#878787] bg-[#4a4a4a] text-white">
            <div className="ml-px"><Grip /></div>
            <div className="ml-[2px] flex items-center">
                <ToolButton icon="wizard" label="Wizard" />
                <ToolButton icon="cancel" label="Cancel" />
                <ToolButton icon="table" label="Coordinate Table" />
                <Divider />
            </div>
            <div className="flex h-9 gap-1 bg-[#565656] pl-[3px]">
                <div className="w-[52px]">
                    <label htmlFor="length" className="flex h-4 items-center gap-px pl-px"><Unlocked />Length</label>
                    <input id="length" defaultValue="0 in" className="block h-5 w-full border border-[#999] bg-[#272727] px-[3px] outline-none" />
                </div>
                <div className="w-[52px]">
                    <label htmlFor="angle" className="flex h-4 items-center gap-px pl-px"><Unlocked />Angle</label>
                    <div className="flex h-5 border border-[#999] bg-[#272727]">
                        <input id="angle" defaultValue="0" className="min-w-0 flex-1 px-[3px] outline-none" />
                        <div className="w-4">
                            <button type="button" aria-label="Increase angle" className="block h-[9px] w-full border border-[#777] bg-[#4a4a4a]">
                                <svg viewBox="0 0 14 7" className="block h-[7px] w-full"><path d="M5 5h4L7 3z" fill="#fff" /></svg>
                            </button>
                            <button type="button" aria-label="Decrease angle" className="block h-[9px] w-full border border-[#777] bg-[#4a4a4a]">
                                <svg viewBox="0 0 14 7" className="block h-[7px] w-full"><path d="M5 2h4L7 4z" fill="#fff" /></svg>
                            </button>
                        </div>
                    </div>
                </div>
            </div>
        </section>
    );
}

const coords = [
    { axis: 'X', value: '1.06025 in' },
    { axis: 'Y', value: '5.848213 in' },
    { axis: 'Z', value: '0 in', off: true },
];

function StatusBar() {
    return (
        <footer className="flex h-[26px] shrink-0 items-center border-t border-[#3c3c3c] bg-[#565656] pr-[15px] pl-2 text-white">
            <p className="flex-1 pb-1">Define the start point of the line</p>
            <button type="button" className="mr-2">SNAP</button>
            <button type="button" className="mr-[14px]">GEO</button>
            {coords.map(({ axis, value, off }) => (
                <label key={axis} className="mr-2 flex items-center gap-[3px]">
                    <span className="flex w-2 flex-col items-center text-[8px] leading-[8px] text-[#ccc]">
                        <span className={clsx('mb-px h-2 w-2 border', off ? 'border-[#999]' : 'border-white')} />
                        {axis}
                    </span>
                    <input
                        defaultValue={value}
                        disabled={off}
                        className={clsx('block h-[19px] w-[73px] border border-[#999] bg-[#272727] px-1 outline-none', off && 'text-[#888]')}
                    />
                </label>
            ))}
            <span className="w-14 pb-1">213%</span>
            <time className="pb-1">2:27 PM</time>
        </footer>
    );
}

export default function App() {
    return (
        <div className="flex h-screen flex-col overflow-hidden bg-[#393939] font-[Roboto,'Noto_Sans',sans-serif] text-xs leading-4 text-white select-none">
            <TitleBar />
            <MenuBar />
            <Toolbars />
            <div className="flex min-h-0 flex-1">
                <div className="w-[33px] shrink-0 border-t border-r border-l border-[#878787] border-r-[#333] bg-[#4a4a4a] pt-[3px] pr-px">
                    <Grip vertical />
                    <div className="pt-[3px]"><ToolColumn groups={drawTools} /></div>
                </div>
                <Drawing />
                <PanelDock />
                <div className="w-8 shrink-0 border-t border-[#878787] bg-[#4a4a4a] pt-[3px]">
                    <Grip vertical />
                    <div className="pt-[3px]"><ToolColumn groups={modifyTools} /></div>
                </div>
            </div>
            <Inspector />
            <StatusBar />
        </div>
    );
}
